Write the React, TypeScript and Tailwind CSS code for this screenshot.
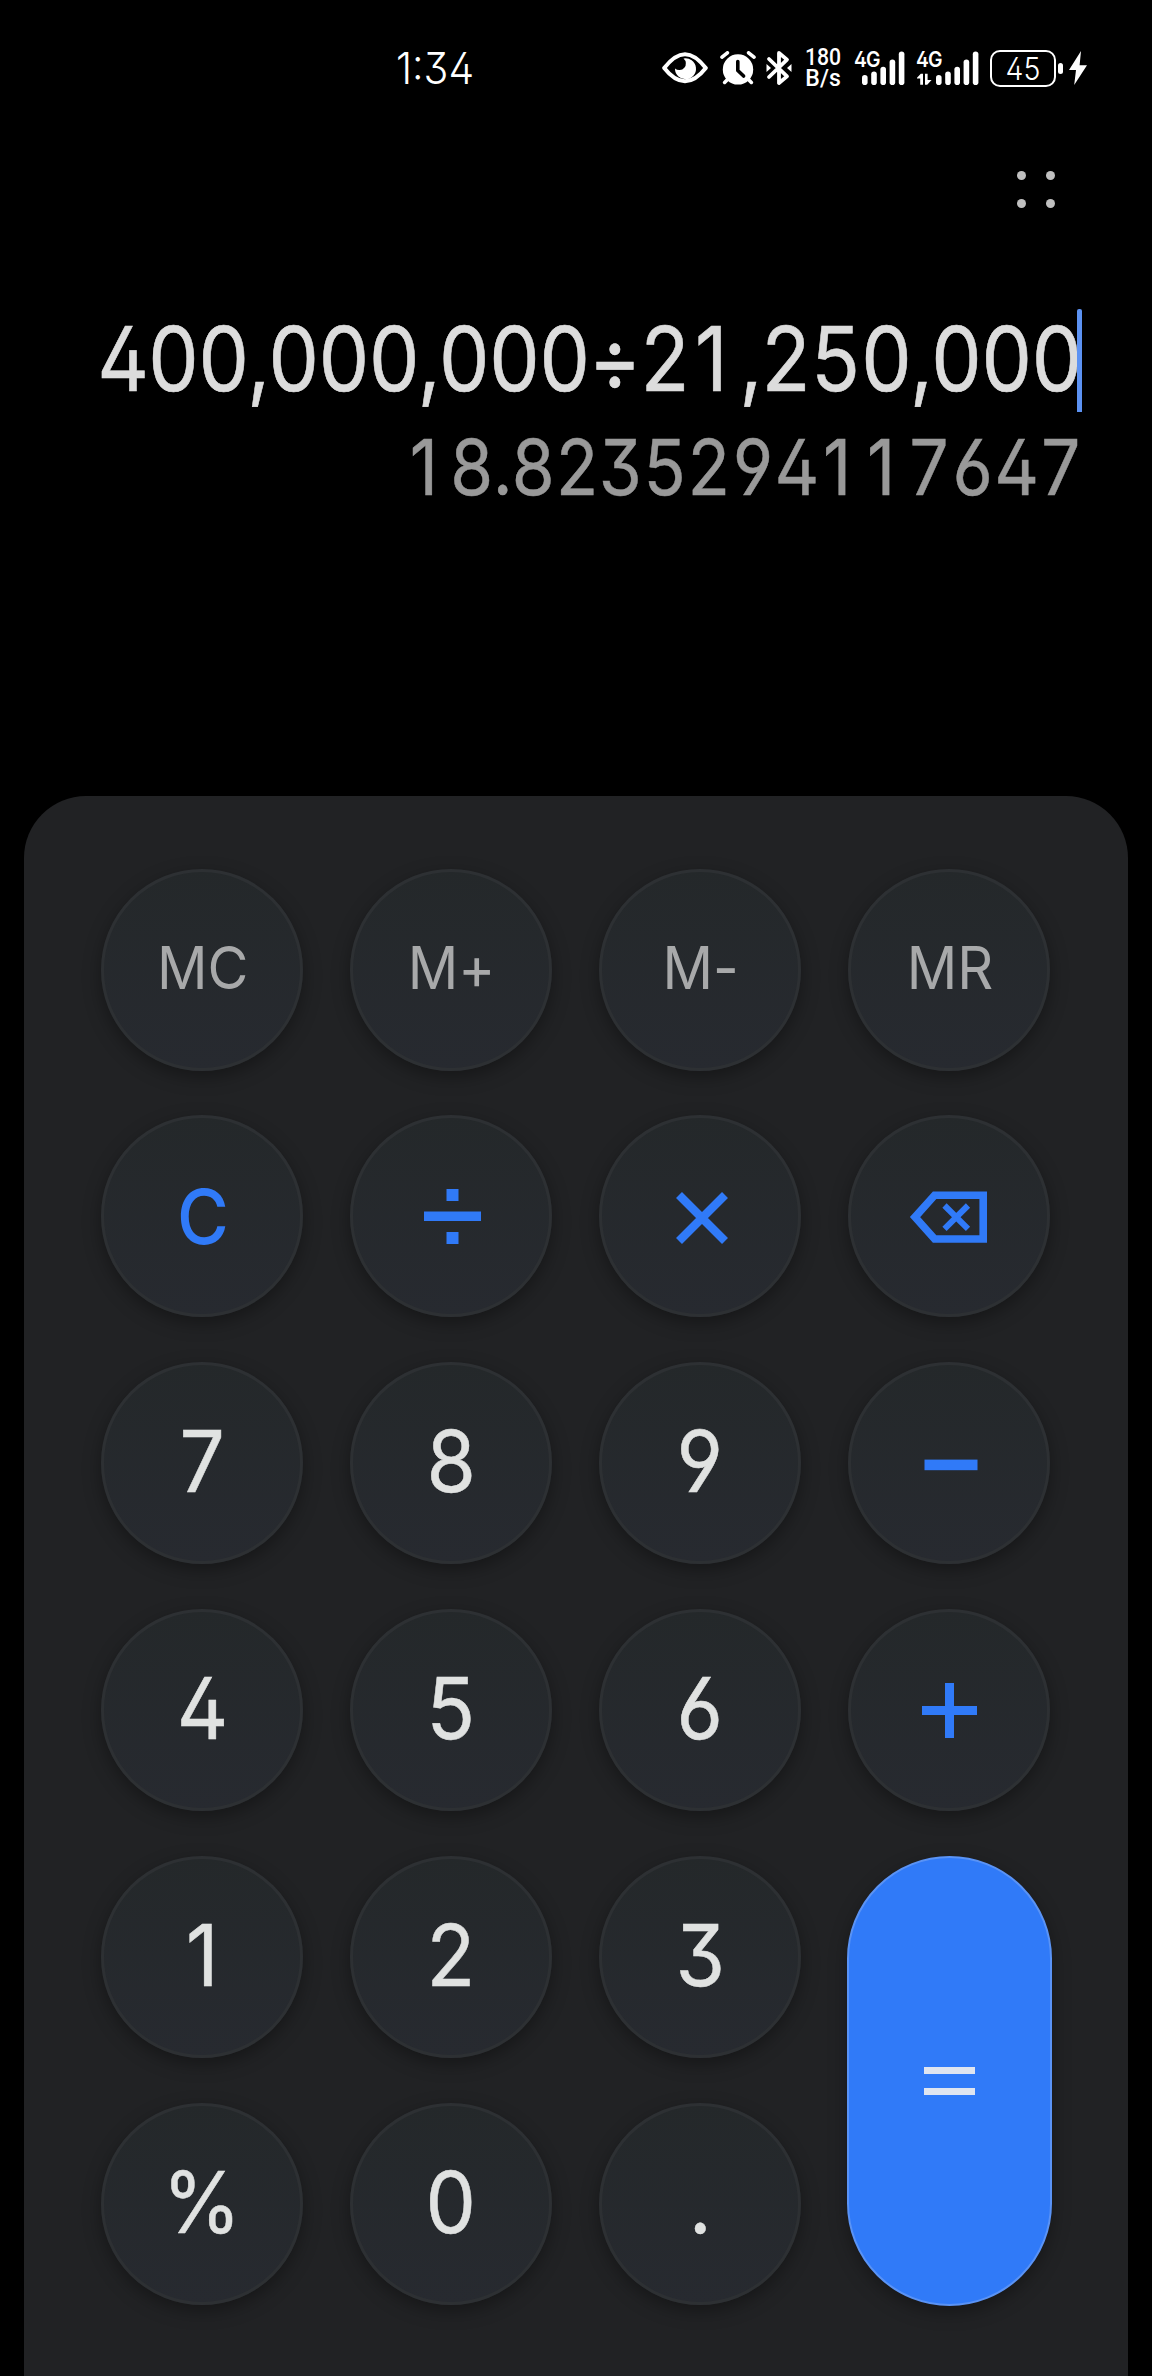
import type { ReactNode } from "react";

const keyBase =
  "flex h-[202px] w-[202px] items-center justify-center rounded-full border-[3px] border-[#2d3033] bg-linear-to-b from-[#24282a] to-[#272a30] bg-origin-border shadow-[0_6px_18px_rgba(0,0,0,0.34)]";

function Key({ label, children }: { label: string; children: ReactNode }) {
  return (
    <button type="button" aria-label={label} className={keyBase}>
      {children}
    </button>
  );
}

function Digit({ value }: { value: string }) {
  return (
    <Key label={value}>
      <span className="inline-block scale-x-[0.94] pb-[3px] text-[85px] leading-none text-[#e0e2e1] [-webkit-text-stroke:0.5px_#e0e2e1]">
        {value}
      </span>
    </Key>
  );
}

function Memory({ value }: { value: string }) {
  return (
    <Key label={value}>
      <span className="ml-[2px] inline-block scale-x-[0.94] pb-[3px] text-[59.5px] leading-none whitespace-nowrap text-[#a8a9aa] [font-feature-settings:'calt'_0]">
        {value}
      </span>
    </Key>
  );
}

// Lays digits on an even pitch while keeping the plain, footless "1".
function EvenDigits({ text }: { text: string }) {
  return (
    <>
      {text.split(/(1)/).map((part, i) =>
        part === "1" ? (
          <span key={i} className="inline-block w-[0.635em] pr-[0.11em] text-center proportional-nums">
            1
          </span>
        ) : (
          <span key={i}>{part}</span>
        ),
      )}
    </>
  );
}

function DivideIcon() {
  return (
    <svg viewBox="0 0 60 60" className="ml-[3px] h-[60px] w-[60px] fill-[#307af8]">
      <rect x="1" y="25.5" width="57" height="9.5" />
      <rect x="23.5" y="3" width="12" height="12" />
      <rect x="23.5" y="46" width="12" height="12" />
    </svg>
  );
}

function TimesIcon() {
  return (
    <svg viewBox="0 0 60 60" className="mt-[3px] ml-[3px] h-[60px] w-[60px] stroke-[#307af8]" strokeWidth="8.4">
      <path d="M7 7 L53 53 M53 7 L7 53" />
    </svg>
  );
}

function BackspaceIcon() {
  return (
    <svg viewBox="0 0 78 54" className="mt-[2px] ml-[-3px] h-[54px] w-[78px] fill-none stroke-[#307af8]">
      <path d="M25.6 5.2 L74.2 5.2 L74.2 49 L25.6 49 L6 27.1 Z" strokeWidth="7.6" strokeLinejoin="miter" />
      <path d="M35.5 15.5 L59 38.8 M59 15.5 L35.5 38.8" strokeWidth="6" />
    </svg>
  );
}

function MinusIcon() {
  return (
    <svg viewBox="0 0 54 12" className="mt-[3px] ml-[3px] h-[12px] w-[54px] fill-[#307af8]">
      <rect x="0.5" y="0.6" width="53" height="10.6" />
    </svg>
  );
}

function PlusIcon() {
  return (
    <svg viewBox="0 0 55 55" className="mt-px ml-px h-[55px] w-[55px] fill-[#307af8]">
      <rect x="0" y="23" width="55" height="9" />
      <rect x="23" y="0" width="9" height="55" />
    </svg>
  );
}

function EyeIcon() {
  return (
    <svg viewBox="0 0 46 32" className="h-[32px] w-[46px]">
      <path
        d="M2.2 16 C10 6 16 2.2 23 2.2 C30 2.2 36 6 43.8 16 C36 26 30 29.2 23 29.2 C16 29.2 10 26 2.2 16 Z"
        fill="none"
        stroke="#fff"
        strokeWidth="4"
        strokeLinejoin="round"
      />
      <path d="M21.5 6.4 A10.5 10.5 0 1 1 13 16.5 A5.6 5.6 0 1 0 21.5 6.4 Z" fill="#fff" />
    </svg>
  );
}

function AlarmIcon() {
  return (
    <svg viewBox="0 0 36 34" className="ml-[12px] h-[34px] w-[36px]" fill="none" stroke="#fff" strokeLinecap="round">
      <circle cx="18" cy="18.4" r="15.2" fill="#fff" stroke="none" />
      <path d="M2 6.2 L7.4 1.8 M34 6.2 L28.6 1.8" strokeWidth="3.6" />
      <path d="M8 28 L4.6 31.4 M28 28 L31.4 31.4" strokeWidth="3.6" />
      <path d="M17.8 10.5 V19.5 L23.6 25" stroke="#000" strokeWidth="3.6" strokeLinejoin="round" />
    </svg>
  );
}

function BluetoothIcon() {
  return (
    <svg viewBox="0 0 26 36" className="ml-[10px] h-[36px] w-[26px]" fill="none" stroke="#fff">
      <path
        d="M3 9 L21 26.4 L13 33 V3 L21 9.6 L3 27"
        strokeWidth="3.8"
        strokeLinejoin="round"
        strokeLinecap="round"
      />
      <path d="M0.5 14 L5 18 L0.5 22 Z M25.5 14 L21 18 L25.5 22 Z" fill="#fff" stroke="none" />
    </svg>
  );
}

function Signal({ activity }: { activity?: boolean }) {
  return (
    <div className={activity ? "relative ml-[11px] h-[36px] w-[63px]" : "relative ml-[13px] h-[36px] w-[51px]"}>
      <svg viewBox={activity ? "0 0 63 36" : "12 0 51 36"} className="h-full w-full fill-white">
        <rect x="20" y="25" width="5.6" height="10" rx="2.8" />
        <rect x="29.2" y="21.5" width="5.6" height="13.5" rx="2.8" />
        <rect x="38.4" y="16.8" width="5.6" height="18.2" rx="2.8" />
        <rect x="47.6" y="9.4" width="5.6" height="25.6" rx="2.8" />
        <rect x="56.8" y="1.4" width="5.6" height="33.6" rx="2.8" />
        {activity && <path d="M1 27.8 L4.8 23.8 H7 V34.8 H4.2 V28.6 H1 Z M9 23.8 H11.6 V30 H15.6 L11.2 34.8 H9 Z" />}
      </svg>
      <span className="absolute top-0 left-0 inline-block origin-left scale-x-[0.9] text-[21.5px] leading-[18px] font-semibold tracking-[-1px]">
        4G
      </span>
    </div>
  );
}

function Battery() {
  return (
    <div className="ml-[11px] flex items-center">
      <div className="flex h-[37px] w-[66px] items-center justify-center rounded-[10px] border-[2.5px] border-white">
        <span className="inline-block scale-x-[0.92] text-[31px] leading-none font-light">45</span>
      </div>
      <div className="ml-[2px] h-[11px] w-[4.5px] rounded-full bg-white" />
      <svg viewBox="0 0 18 36" className="ml-[6.5px] h-[36px] w-[18px] fill-white">
        <path d="M12 1 L0 20 H7 L5.2 35 L18 15.2 H10.6 Z" />
      </svg>
    </div>
  );
}

function StatusBar() {
  return (
    <header className="flex h-[136px] w-full items-center text-white">
      <div className="ml-[396px] w-[266px]">
        <span className="inline-block origin-left scale-x-[0.95] text-[43px] leading-none font-light">1:34</span>
      </div>
      <EyeIcon />
      <AlarmIcon />
      <BluetoothIcon />
      <div className="ml-[12.5px] flex w-[36.5px] flex-col items-center font-[Roboto] text-[23.5px] leading-[21.5px] font-medium">
        <div className="scale-x-[0.9]">180</div>
        <div className="scale-x-[0.98]">B/s</div>
      </div>
      <Signal />
      <Signal activity />
      <Battery />
    </header>
  );
}

export default function App() {
  return (
    <main className="flex h-[2376px] w-[1152px] flex-col overflow-hidden bg-black font-[Inter,sans-serif] [font-feature-settings:'ss01','cv02','cv03','cv04']">
      <StatusBar />

      <div className="flex h-[107px] justify-end pt-[35px] pr-[97px]">
        <button type="button" aria-label="More" className="grid h-[38px] grid-cols-2 content-start gap-x-[20px] gap-y-[19px]">
          <span className="h-[9px] w-[9px] rounded-full bg-[#c0c0c0]" />
          <span className="h-[9px] w-[9px] rounded-full bg-[#c0c0c0]" />
          <span className="h-[9px] w-[9px] rounded-full bg-[#c0c0c0]" />
          <span className="h-[9px] w-[9px] rounded-full bg-[#c0c0c0]" />
        </button>
      </div>

      <section className="flex h-[553px] flex-col items-end pt-[66px] pr-[70px]">
        <div className="flex h-[103px] items-center">
          <span className="-mr-[4px] inline-block origin-right scale-x-[0.9] pb-[4px] text-[89px] leading-none tracking-[-1.9px] whitespace-nowrap text-[#dcdcdc] tabular-nums [-webkit-text-stroke:0.6px_#dcdcdc]">
            <EvenDigits text="400,000,000÷21,250,000" />
          </span>
          <span className="relative h-[103px] w-[5px] rounded-t-[2px] bg-[#5c92f2]" />
        </div>
        <div className="flex h-[110px] items-center">
          <span className="inline-block origin-right scale-x-[0.9] text-[77px] leading-none tracking-[-1.1px] whitespace-nowrap text-[#999999] tabular-nums [-webkit-text-stroke:0.5px_#999999]">
            <EvenDigits text="18.8235294117647" />
          </span>
        </div>
      </section>

      <section className="ml-[24px] flex h-[1580px] w-[1104px] justify-center rounded-t-[62px] bg-[#212224] pt-[72.6px]">
        <div className="mr-[1px] grid h-[1436px] grid-cols-[repeat(4,202px)] grid-rows-[repeat(6,202px)] gap-x-[47px] gap-y-[44.8px]">
          <Memory value="MC" />
          <Memory value="M+" />
          <Memory value="M-" />
          <Memory value="MR" />

          <Key label="Clear">
            <span className="ml-px inline-block scale-x-[0.93] text-[76px] leading-none font-medium text-[#307af8]">C</span>
          </Key>
          <Key label="Divide">
            <DivideIcon />
          </Key>
          <Key label="Multiply">
            <TimesIcon />
          </Key>
          <Key label="Backspace">
            <BackspaceIcon />
          </Key>

          <Digit value="7" />
          <Digit value="8" />
          <Digit value="9" />
          <Key label="Subtract">
            <MinusIcon />
          </Key>

          <Digit value="4" />
          <Digit value="5" />
          <Digit value="6" />
          <Key label="Add">
            <PlusIcon />
          </Key>

          <Digit value="1" />
          <Digit value="2" />
          <Digit value="3" />
          <button
            type="button"
            aria-label="Equals"
            className="row-span-2 -ml-px flex h-[450px] w-[205px] items-center justify-center rounded-full border-2 border-[#5a93f5] bg-[#307af8] shadow-[0_6px_18px_rgba(0,0,0,0.34)]"
          >
            <svg viewBox="0 0 51 28" className="h-[28px] w-[51px] fill-[#dfe5f0]">
              <rect width="51" height="7" />
              <rect y="21" width="51" height="7" />
            </svg>
          </button>

          <Digit value="%" />
          <Digit value="0" />
          <Digit value="." />
        </div>
      </section>
    </main>
  );
}
